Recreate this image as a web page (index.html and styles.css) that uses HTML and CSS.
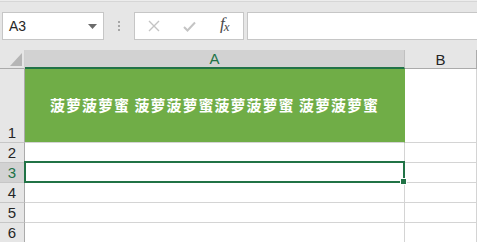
FILE: index.html
```html
<!DOCTYPE html>
<html lang="zh-CN">
<head>
    <meta charset="UTF-8">
    <title>Sheet</title>
    <link rel="stylesheet" href="styles.css">
</head>
<body>

<div class="toolbar">
    <div class="namebox">
        <span>A3</span>
        <svg class="caret" width="9" height="5" viewBox="0 0 9 5"><path d="M0 0H9L4.5 5Z" fill="#6b6b6b"/></svg>
    </div>
    <div class="grip"><i></i><i></i><i></i></div>
    <div class="fbtns">
        <svg width="12" height="12" viewBox="0 0 12 12"><path d="M1 1L11 11M11 1L1 11" stroke="#c4c4c4" stroke-width="1.4" fill="none"/></svg>
        <svg width="13" height="11" viewBox="0 0 13 11"><path d="M1 6L4.5 9.5L12 1.5" stroke="#c4c4c4" stroke-width="2" fill="none"/></svg>
        <span class="fx">f<sub>x</sub></span>
    </div>
    <div class="finput"></div>
</div>

<div class="sheet">
    <!-- header row -->
    <div class="corner"><svg width="12" height="13" viewBox="0 0 12 13"><path d="M12 0V13H0Z" fill="#b5b5b5"/></svg></div>
    <div class="colhead active">A</div>
    <div class="colhead">B</div>

    <!-- row 1 -->
    <div class="rowhead">1</div>
    <div class="cell title">菠萝菠萝蜜 菠萝菠萝蜜菠萝菠萝蜜 菠萝菠萝蜜</div>
    <div class="cell"></div>

    <div class="rowhead">2</div>
    <div class="cell"></div>
    <div class="cell"></div>

    <div class="rowhead active">3</div>
    <div class="cell selected"><div class="selbox"><div class="handle"></div></div></div>
    <div class="cell"></div>

    <div class="rowhead">4</div>
    <div class="cell"></div>
    <div class="cell"></div>

    <div class="rowhead">5</div>
    <div class="cell"></div>
    <div class="cell"></div>

    <div class="rowhead">6</div>
    <div class="cell"></div>
    <div class="cell"></div>
</div>

</body>
</html>
```

FILE: styles.css
```css
body {
    margin: 0;
    width: 477px;
    height: 242px;
    overflow: hidden;
    background: #ffffff;
    font-family: "Liberation Sans", Arial, sans-serif;
}

/* formula bar */
.toolbar {
    height: 50px;
    box-sizing: border-box;
    background: #e6e6e6;
    border-top: 1px solid #ececec;
    box-shadow: inset 0 1px 0 #d6d6d6;
    padding-top: 11px;
    display: flex;
    align-items: flex-start;
}

.namebox {
    margin-left: 2px;
    width: 102px;
    height: 28px;
    box-sizing: border-box;
    background: #fff;
    border: 1px solid #c6c6c6;
    display: flex;
    align-items: center;
    justify-content: space-between;
    padding: 0 6px 0 6px;
    font-size: 14px;
    color: #262626;
}

.namebox .caret {
    margin-top: 1px;
}

.grip {
    width: 30px;
    height: 28px;
    display: flex;
    flex-direction: column;
    align-items: center;
    justify-content: center;
    gap: 2px;
}

.grip i {
    display: block;
    width: 2px;
    height: 2px;
    background: #a6a6a6;
}

.fbtns {
    width: 110px;
    height: 28px;
    box-sizing: border-box;
    background: #fff;
    border: 1px solid #c6c6c6;
    display: flex;
    align-items: center;
    padding-left: 13px;
    gap: 23px;
}

.fx {
    font-family: "Liberation Serif", "Times New Roman", serif;
    font-style: italic;
    font-size: 17px;
    line-height: 17px;
    color: #4a4a4a;
    margin-left: 1px;
    margin-top: -2px;
}

.fx sub {
    font-size: 13px;
    vertical-align: -2px;
    margin-left: -1px;
}

.finput {
    flex: 1;
    height: 28px;
    box-sizing: border-box;
    margin-left: 3px;
    margin-right: -2px;
    background: #fff;
    border: 1px solid #c6c6c6;
}

/* grid */
.sheet {
    display: grid;
    grid-template-columns: 25px 380px 72px;
    grid-template-rows: 19px 74px repeat(5, 20px);
}

.corner {
    background: #e6e6e6;
    border-right: 1px solid #d0d0d0;
    border-bottom: 1px solid #ababab;
    display: flex;
    align-items: flex-end;
    justify-content: flex-end;
    padding: 0 2px 2px 0;
}

.corner svg {
    display: block;
}

.colhead {
    background: #e6e6e6;
    border-right: 1px solid #ababab;
    border-bottom: 1px solid #ababab;
    display: flex;
    align-items: flex-end;
    justify-content: center;
    font-size: 15px;
    line-height: 17px;
    color: #262626;
}

.colhead.active {
    background: #d2d2d2;
    border-right-color: #c0c0c0;
    border-bottom: 2px solid #217346;
    color: #217346;
}

.rowhead {
    background: #e6e6e6;
    border-right: 1px solid #ababab;
    border-bottom: 1px solid #c6c6c6;
    display: flex;
    align-items: flex-end;
    justify-content: center;
    font-size: 15px;
    line-height: 18px;
    color: #262626;
}

.rowhead.active {
    background: #d2d2d2;
    color: #217346;
}

.cell {
    border-right: 1px solid #d4d4d4;
    border-bottom: 1px solid #d4d4d4;
}

.cell.title {
    background: #70ad47;
    border-right-color: #70ad47;
    display: flex;
    align-items: center;
    justify-content: center;
    font-family: "Noto Sans CJK SC", sans-serif;
    font-weight: bold;
    font-size: 15px;
    letter-spacing: 1px;
    color: #ffffff;
    padding-bottom: 2px;
}

.cell.selected {
    position: relative;
}

.selbox {
    position: absolute;
    left: -1px;
    top: -2px;
    right: -1px;
    bottom: -1px;
    border: 2px solid #217346;
}

.handle {
    position: absolute;
    right: -4px;
    bottom: -4px;
    width: 5px;
    height: 5px;
    background: #217346;
    border: 1px solid #ffffff;
}
```
